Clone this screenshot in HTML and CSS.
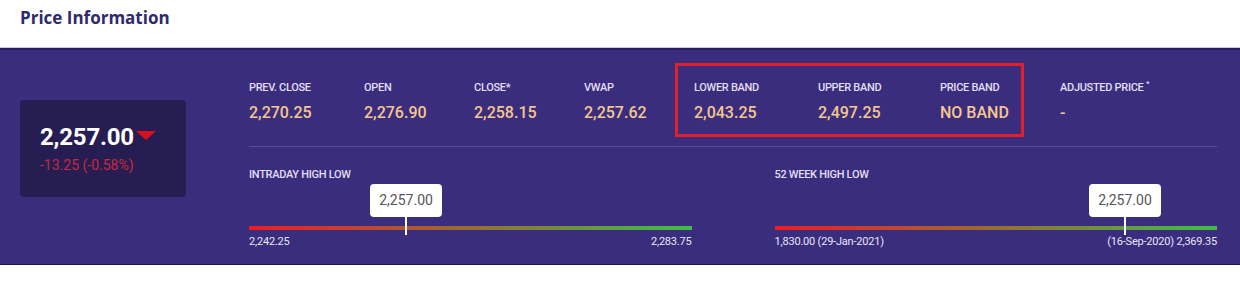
FILE: index.html
```html
<!DOCTYPE html>
<html lang="en">
<head>
  <meta charset="UTF-8" />
  <meta name="viewport" content="width=device-width, initial-scale=1.0"/>
  <title>Price Information</title>
  <link rel="stylesheet" href="styles.css">
</head>
<body>

<header class="page-title">
  <h2>Price Information</h2>
</header>

<section class="price-panel">
  <div class="ltp-box">
    <div class="ltp">2,257.00<span class="arrow-down"></span></div>
    <div class="change">-13.25 (-0.58%)</div>
  </div>

  <div class="details">
    <div class="stats">
      <div class="stat w115">
        <p class="label">PREV. CLOSE</p>
        <p class="value">2,270.25</p>
      </div>
      <div class="stat w110">
        <p class="label">OPEN</p>
        <p class="value">2,276.90</p>
      </div>
      <div class="stat w110">
        <p class="label">CLOSE*</p>
        <p class="value">2,258.15</p>
      </div>
      <div class="stat w91">
        <p class="label">VWAP</p>
        <p class="value">2,257.62</p>
      </div>

      <div class="band-group">
        <div class="stat w124">
          <p class="label">LOWER BAND</p>
          <p class="value">2,043.25</p>
        </div>
        <div class="stat w122">
          <p class="label">UPPER BAND</p>
          <p class="value">2,497.25</p>
        </div>
        <div class="stat w66">
          <p class="label">PRICE BAND</p>
          <p class="value">NO BAND</p>
        </div>
      </div>

      <div class="stat adjusted">
        <p class="label">ADJUSTED PRICE <sup>*</sup></p>
        <p class="value">-</p>
      </div>
    </div>

    <div class="ranges">
      <div class="range">
        <p class="label">INTRADAY HIGH LOW</p>
        <div class="track">
          <div class="marker" style="left: 35.5%;">
            <span class="tip">2,257.00</span>
            <span class="stem"></span>
          </div>
          <div class="bar"></div>
        </div>
        <div class="range-ends">
          <span>2,242.25</span>
          <span>2,283.75</span>
        </div>
      </div>

      <div class="range">
        <p class="label">52 WEEK HIGH LOW</p>
        <div class="track">
          <div class="marker" style="left: 79.2%;">
            <span class="tip">2,257.00</span>
            <span class="stem"></span>
          </div>
          <div class="bar"></div>
        </div>
        <div class="range-ends">
          <span>1,830.00 (29-Jan-2021)</span>
          <span>(16-Sep-2020) 2,369.35</span>
        </div>
      </div>
    </div>
  </div>
</section>

</body>
</html>
```

FILE: styles.css
```css
body {
  margin: 0;
  background: #fff;
  font-family: Roboto, "Liberation Sans", Arial, sans-serif;
}

p {
  margin: 0;
}

.page-title {
  height: 48px;
  padding: 0 20px;
}

.page-title h2 {
  margin: 0;
  padding-top: 6px;
  font-family: "Open Sans", Lato, sans-serif;
  font-size: 17px;
  line-height: 24px;
  font-weight: 700;
  color: #2e2a6c;
}

.price-panel {
  display: flex;
  align-items: flex-start;
  background: #3b2d7d;
  border-top: 2px solid #281d64;
  border-bottom: 1px solid #1e1452;
  box-shadow: 0 -1px 0 #cdc9e3, 0 1px 0 #dcdaee;
  padding: 13px 23px 15px 20px;
}

.ltp-box {
  width: 166px;
  height: 97px;
  box-sizing: border-box;
  margin-top: 37px;
  padding: 23px 20px 0;
  background: #261d52;
  border-radius: 4px;
}

.ltp {
  display: flex;
  align-items: center;
  font-size: 24px;
  line-height: 28px;
  font-weight: 700;
  color: #fff;
  letter-spacing: -0.2px;
}

.arrow-down {
  width: 0;
  height: 0;
  margin: -4px 0 0 2px;
  border-left: 10px solid transparent;
  border-right: 10px solid transparent;
  border-top: 9px solid #d8121c;
}

.change {
  margin-top: 5px;
  font-size: 14px;
  line-height: 18px;
  color: #c62a40;
}

.details {
  flex: 1;
  margin-left: 63px;
}

.stats {
  display: flex;
  align-items: flex-start;
  padding-bottom: 9px;
  border-bottom: 1px solid #5a4d9c;
}

.stat {
  padding-top: 18px;
}

.w115 { width: 115px; }
.w110 { width: 110px; }
.w91 { width: 91px; }
.w124 { width: 124px; }
.w122 { width: 122px; }
.w66 { width: 66px; }

.label {
  font-size: 11px;
  line-height: 14px;
  font-weight: 500;
  color: #e2def4;
  letter-spacing: -0.3px;
  white-space: nowrap;
}

.label sup {
  font-size: 8px;
  line-height: 0;
}

.value {
  margin-top: 8px;
  font-size: 16px;
  line-height: 20px;
  font-weight: 500;
  color: #f4c78f;
  white-space: nowrap;
}

.band-group {
  display: flex;
  border: 3px solid #e21f2c;
  padding: 0 15px 11px 16px;
}

.band-group .stat {
  padding-top: 15px;
}

.adjusted {
  margin-left: 36px;
}

.ranges {
  display: grid;
  grid-template-columns: 1fr 1fr;
  gap: 83px;
  padding-top: 21px;
}

.track {
  position: relative;
  height: 48px;
}

.bar {
  position: absolute;
  left: 0;
  right: 0;
  bottom: 0;
  height: 4px;
  background: linear-gradient(to right, #ee1c24, #3fbd48);
}

.marker {
  position: absolute;
  top: 2px;
  width: 0;
  z-index: 1;
}

.tip {
  position: absolute;
  left: 0;
  transform: translateX(-50%);
  width: 72px;
  height: 33px;
  line-height: 33px;
  text-align: center;
  background: #fff;
  border-radius: 4px;
  font-size: 14px;
  color: #555;
}

.stem {
  position: absolute;
  left: -1px;
  top: 32px;
  width: 2px;
  height: 19px;
  background: #fff;
}

.range-ends {
  display: flex;
  justify-content: space-between;
  margin-top: 5px;
  font-size: 11px;
  line-height: 14px;
  color: #e8e5f6;
  letter-spacing: -0.2px;
}
```
